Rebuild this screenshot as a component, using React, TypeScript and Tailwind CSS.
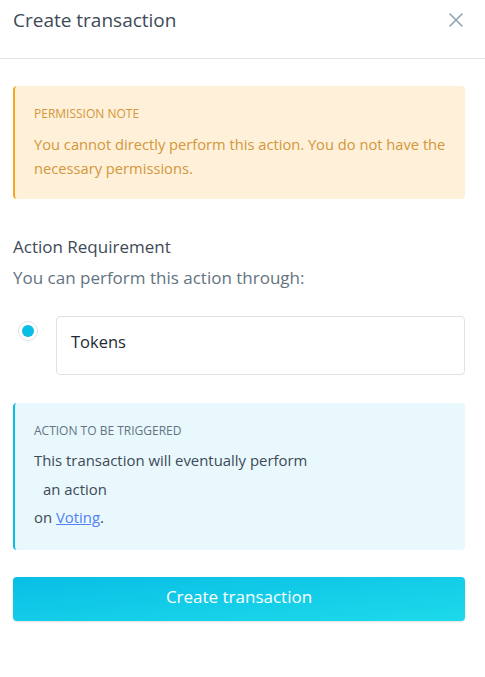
import { useState } from "react";

export default function App() {
  const [selected] = useState("tokens");

  return (
    <div className="min-h-screen w-[485px] bg-white text-[#212b36] font-['Open_Sans',sans-serif]">
      {/* HEADER */}
      <header className="h-[59px] border-b border-[#dde4e9] flex items-start justify-between pl-[13px] pr-[20px] pt-[7px]">
        <h1 className="text-[19px] leading-[26px] text-[#3e4a57]">Create transaction</h1>
        <button type="button" aria-label="Close" className="mt-[5px] mr-[1px] text-[#8fa4b5]">
          <svg width="16" height="16" viewBox="0 0 16 16" fill="none" stroke="currentColor" strokeWidth="1.6">
            <path d="M1.5 1.5 L14.5 14.5 M14.5 1.5 L1.5 14.5" />
          </svg>
        </button>
      </header>

      <div className="pl-[13px] pr-[20px] pt-[27px] flex flex-col">
        {/* PERMISSION NOTE */}
        <div className="rounded-[4px] border-l-2 border-[#f5a623] bg-[#fef0d9] pl-[19px] pr-4 pt-[20px] pb-[19px]">
          <p className="uppercase text-[12px] leading-[16px] text-[#d4973a]">Permission note</p>
          <p className="mt-[10px] text-[14.7px] leading-[24px] text-[#d4973a]">
            You cannot directly perform this action. You do not have the necessary permissions.
          </p>
        </div>

        {/* ACTION REQUIREMENT */}
        <h2 className="mt-[37px] text-[17px] leading-[22px] text-[#3e4a57]">Action Requirement</h2>
        <p className="mt-[9px] text-[17px] leading-[22px] text-[#637381]">You can perform this action through:</p>

        <div className="mt-[27px] flex items-start gap-[18px]">
          <div className="mt-[5px] ml-[5px] w-[20px] h-[20px] rounded-full border border-[#dde4e9] bg-white flex items-center justify-center">
            {selected === "tokens" && <div className="w-[12px] h-[12px] rounded-full bg-[#08bee5]" />}
          </div>
          <div className="flex-1 h-[59px] rounded-[4px] border border-[#dde4e9] flex items-center px-[14px] pb-[6px]">
            <span className="text-[16.5px] text-[#212b36]">Tokens</span>
          </div>
        </div>

        {/* ACTION TO BE TRIGGERED */}
        <div className="mt-[28px] rounded-[4px] border-l-2 border-[#08bee5] bg-[#e8f8fd] pl-[19px] pr-4 pt-[20px] pb-[18px]">
          <p className="uppercase text-[12px] leading-[16px] text-[#637381]">Action to be triggered</p>
          <div className="mt-[7px] text-[14.9px] leading-[28.5px] text-[#3e4a57]">
            <p>This transaction will eventually perform</p>
            <p className="pl-[9px]">an action</p>
            <p>
              on <a href="#" className="text-[#5381f9] underline">Voting</a>.
            </p>
          </div>
        </div>

        {/* SUBMIT */}
        <button
          type="button"
          className="mt-[27px] h-[44px] pb-[4px] rounded-[4px] bg-gradient-to-br from-[#08bee5] to-[#1ddaea] text-white text-[17px] shadow-sm"
        >
          Create transaction
        </button>
      </div>
    </div>
  );
}
